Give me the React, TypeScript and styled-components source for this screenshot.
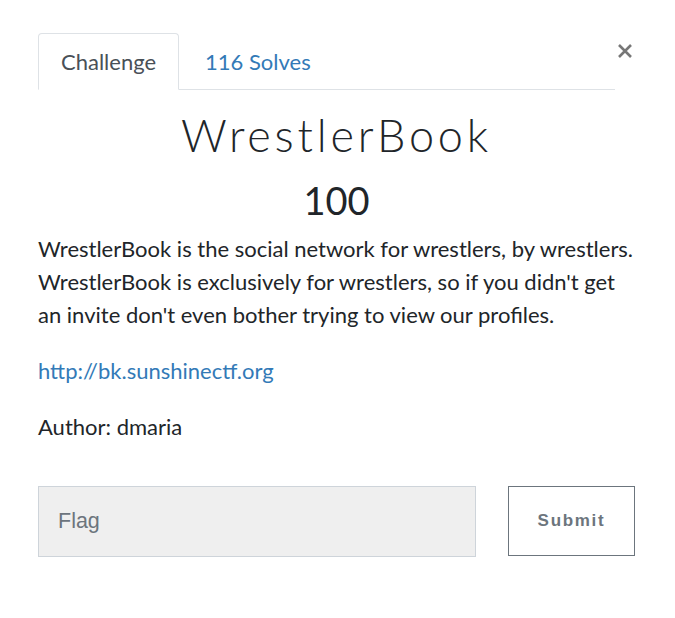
import React from "react";
import styled, { createGlobalStyle } from "styled-components";

const Global = createGlobalStyle`
  html, body { margin: 0; padding: 0; background: #ffffff; }
  body { font-family: Lato, "Open Sans", sans-serif; color: #212529; }
  * { box-sizing: border-box; }
`;

const Modal = styled.div`
  width: 675px;
  height: 618px;
  padding: 33px 40px 0 38px;
  display: flex;
  flex-direction: column;
`;

const HeaderRow = styled.div`
  display: flex;
  align-items: flex-start;
`;

const Tabs = styled.ul`
  list-style: none;
  margin: 0;
  padding: 0;
  display: flex;
  flex: 1;
  min-width: 0;
  border-bottom: 1px solid #dee2e6;
`;

const Tab = styled.li<{ $active?: boolean }>`
  height: 57px;
  padding: 0 ${(p) => (p.$active ? 22 : 25)}px;
  display: flex;
  align-items: center;
  font-size: 22px;
  margin-bottom: -1px;
  border: 1px solid ${(p) => (p.$active ? "#dee2e6" : "transparent")};
  border-bottom-color: ${(p) => (p.$active ? "#ffffff" : "transparent")};
  border-radius: 4px 4px 0 0;
  background: ${(p) => (p.$active ? "#ffffff" : "transparent")};
  color: ${(p) => (p.$active ? "#495057" : "#337ab7")};
`;

const Close = styled.button`
  flex: 0 0 20px;
  border: none;
  background: none;
  padding: 0;
  margin: 6px 0 0 0;
  height: 24px;
  display: flex;
  align-items: center;
  justify-content: center;
  cursor: pointer;
`;

const Title = styled.h1`
  margin: 20px 0 0;
  text-align: center;
  font-family: Lato, sans-serif;
  font-weight: 300;
  font-size: 45px;
  letter-spacing: 3.8px;
  line-height: 50px;
  color: #212529;
`;

const Points = styled.div`
  text-align: center;
  font-size: 38px;
  line-height: 48px;
  color: #212529;
  margin-top: 16px;
`;

const Description = styled.div`
  font-size: 22px;
  line-height: 33px;
  margin-top: 8px;
  color: #212529;
`;

const Para = styled.p`
  margin: 0 0 23px;
`;

const Link = styled.a`
  color: #337ab7;
  text-decoration: none;
`;

const FormRow = styled.div`
  display: flex;
  justify-content: space-between;
  margin-top: 20px;
`;

const FlagInput = styled.input`
  width: 438px;
  height: 71px;
  border: 1px solid #ced4da;
  background: #efefef;
  padding: 0 19px;
  font-family: "Liberation Sans", Arial, sans-serif;
  font-size: 21.5px;
  color: #495057;
  outline: none;
  &::placeholder { color: #6c757d; }
`;

const SubmitBtn = styled.button`
  width: 127px;
  height: 70px;
  border: 1px solid #6c757d;
  background: #fff;
  color: #6c757d;
  font-family: "Liberation Sans", Arial, sans-serif;
  font-weight: 700;
  font-size: 17px;
  letter-spacing: 1.7px;
  border-radius: 0;
`;

export default function App() {
  return (
    <>
      <Global />
      <Modal>
        <HeaderRow>
          <Tabs>
            <Tab $active>Challenge</Tab>
            <Tab>116 Solves</Tab>
          </Tabs>
          <Close aria-label="Close">
            <svg width="16" height="16" viewBox="0 0 16 16">
              <path d="M2 2 L14 14 M14 2 L2 14" stroke="#777" strokeWidth="2.6" />
            </svg>
          </Close>
        </HeaderRow>
        <Title>WrestlerBook</Title>
        <Points>100</Points>
        <Description>
          <Para>
            WrestlerBook is the social network for wrestlers, by wrestlers. WrestlerBook is exclusively for wrestlers, so if you didn't get an invite don't even bother trying to view our profiles.
          </Para>
          <Para>
            <Link href="#">http://bk.sunshinectf.org</Link>
          </Para>
          <Para>Author: dmaria</Para>
        </Description>
        <FormRow>
          <FlagInput placeholder="Flag" />
          <SubmitBtn>Submit</SubmitBtn>
        </FormRow>
      </Modal>
    </>
  );
}
